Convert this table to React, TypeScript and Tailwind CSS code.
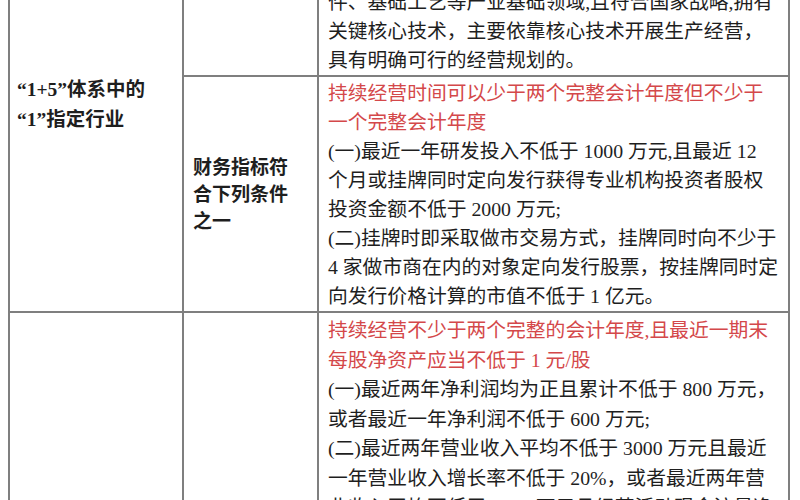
const FONT = "font-['Liberation_Serif','Noto_Sans_CJK_SC',serif]";
const RED = "text-[#d4484a]";

function Lines({ lines, className = "" }: { lines: string[]; className?: string }) {
  return (
    <>
      {lines.map((l, i) => (
        <div key={i} className={`whitespace-nowrap ${className}`}>
          {l}
        </div>
      ))}
    </>
  );
}

const cell = "border-2 border-[#7f7f7f] p-0";

export default function App() {
  return (
    <div className={`w-[800px] h-[500px] overflow-hidden bg-white text-[#1e1e1e] ${FONT}`}>
      <table className="ml-[8px] -mt-[100px] w-[782px] table-fixed border-collapse text-[19.8px] leading-[29px]">
        <colgroup>
          <col className="w-[174px]" />
          <col className="w-[135px]" />
          <col />
        </colgroup>
        <tbody>
          <tr className="h-[175px]">
            <td rowSpan={2} className={`${cell} align-middle pl-[7px] pb-[4px] font-bold text-[19.5px] leading-[30px]`}>
              <div>“1+5”体系中的</div>
              <div>“1”指定行业</div>
            </td>
            <td className={cell}></td>
            <td className={`${cell} align-bottom pl-[9px]`}>
              <Lines
                lines={[
                  "件、基础工艺等产业基础领域,且符合国家战略,拥有",
                  "关键核心技术，主要依靠核心技术开展生产经营，",
                  "具有明确可行的经营规划的。",
                ]}
              />
            </td>
          </tr>
          <tr className="h-[235px]">
            <td className={`${cell} align-middle pl-[9px] font-bold text-[19px] leading-[27px]`}>
              <div>财务指标符</div>
              <div>合下列条件</div>
              <div>之一</div>
            </td>
            <td className={`${cell} align-top pl-[9px] pt-[2px]`}>
              <Lines
                className={RED}
                lines={["持续经营时间可以少于两个完整会计年度但不少于", "一个完整会计年度"]}
              />
              <Lines
                lines={[
                  "(一)最近一年研发投入不低于 1000 万元,且最近 12",
                  "个月或挂牌同时定向发行获得专业机构投资者股权",
                  "投资金额不低于 2000 万元;",
                  "(二)挂牌时即采取做市交易方式，挂牌同时向不少于",
                  "4 家做市商在内的对象定向发行股票，按挂牌同时定",
                  "向发行价格计算的市值不低于 1 亿元。",
                ]}
              />
            </td>
          </tr>
          <tr>
            <td className={cell}></td>
            <td className={cell}></td>
            <td className={`${cell} align-top pl-[9px] pt-[3px] leading-[29.5px]`}>
              <Lines
                className={RED}
                lines={["持续经营不少于两个完整的会计年度,且最近一期末", "每股净资产应当不低于 1 元/股"]}
              />
              <Lines
                lines={[
                  "(一)最近两年净利润均为正且累计不低于 800 万元，",
                  "或者最近一年净利润不低于 600 万元;",
                  "(二)最近两年营业收入平均不低于 3000 万元且最近",
                  "一年营业收入增长率不低于 20%，或者最近两年营",
                  "业收入平均不低于 5000 万元且经营活动现金流量净",
                  "额均为正",
                ]}
              />
            </td>
          </tr>
        </tbody>
      </table>
    </div>
  );
}
